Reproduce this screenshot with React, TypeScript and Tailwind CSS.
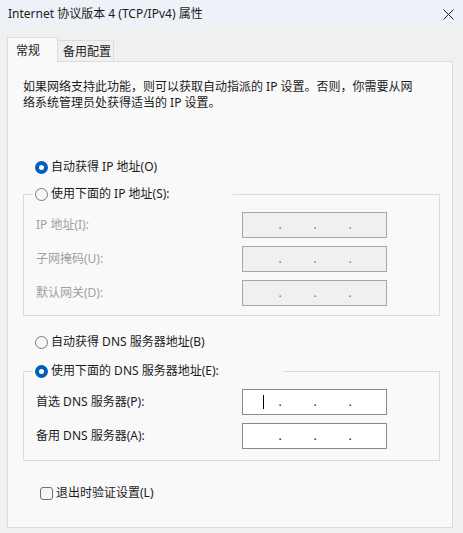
import React from 'react';

const font = { fontFamily: '"Noto Sans", "Noto Sans CJK SC", sans-serif' };

const Radio: React.FC<{ checked?: boolean }> = ({ checked }) =>
  checked ? (
    <span className="inline-block w-[13px] h-[13px] rounded-full border-[4px] border-[#005fb8] bg-white shrink-0" />
  ) : (
    <span className="inline-block w-[13px] h-[13px] rounded-full border border-[#7a7a7a] bg-[#f6f6f6] shrink-0" />
  );

const IpBox: React.FC<{ disabled?: boolean; caret?: boolean }> = ({ disabled, caret }) => (
  <div
    className={`relative w-[145px] h-[26px] border flex items-center pl-[35px] gap-[31px] ${
      disabled ? 'bg-[#f0f0f0] border-[#a6a6a6] text-[#777]' : 'bg-white border-[#8a8a8a] text-[#1b1b1b]'
    }`}
  >
    {caret && <span className="absolute left-[20px] top-[5px] w-px h-[14px] bg-black" />}
    <span className="w-[4px] text-center leading-none">.</span>
    <span className="w-[4px] text-center leading-none">.</span>
    <span className="w-[4px] text-center leading-none">.</span>
  </div>
);

const Row: React.FC<{ label: string; disabled?: boolean; caret?: boolean }> = ({ label, disabled, caret }) => (
  <div className="flex items-center h-[26px]">
    <span className={`w-[206px] ${disabled ? 'text-[#a0a0a0]' : 'text-[#1b1b1b]'}`}>{label}</span>
    <IpBox disabled={disabled} caret={caret} />
  </div>
);

export default function App() {
  return (
    <div className="w-[463px] h-[533px] bg-[#f0f0f0] text-[12px] text-[#1b1b1b] flex flex-col" style={font}>
      {/* title bar */}
      <div className="h-[28px] bg-[#eef2f8] flex items-center justify-between pl-[8px] pr-[9px]">
        <span>Internet 协议版本 4 (TCP/IPv4) 属性</span>
        <svg width="11" height="11" viewBox="0 0 11 11" className="text-[#222]">
          <path d="M0.5 0.5 L10.5 10.5 M10.5 0.5 L0.5 10.5" stroke="currentColor" strokeWidth="1" />
        </svg>
      </div>

      {/* tabs */}
      <div className="flex items-end pl-[7px] mt-[9px]">
        <div className="relative z-10 -mb-px h-[25px] w-[51px] bg-[#f9f9f9] border border-b-0 border-[#dcdcdc] pl-[8px] pt-[4px]">
          常规
        </div>
        <div className="h-[21px] w-[56px] border-t border-r border-[#dcdcdc] pl-[5px] pt-[2px]">备用配置</div>
      </div>

      {/* panel */}
      <div className="ml-[7px] w-[446px] h-[467px] bg-[#f9f9f9] border border-[#dcdcdc] flex flex-col pl-[15px] pr-[13px]">
        <p className="mt-[17px] leading-[16px]">
          如果网络支持此功能，则可以获取自动指派的 IP 设置。否则，你需要从网
          <br />
          络系统管理员处获得适当的 IP 设置。
        </p>

        <label className="mt-[48px] ml-[12px] h-[16px] flex items-center gap-[3px]">
          <Radio checked />
          <span>自动获得 IP 地址(O)</span>
        </label>

        <fieldset className="mt-[11px] w-[417px] border border-[#dcdcdc] pl-[12px] pb-[9px]">
          <legend className="ml-[-3px] w-[200px] h-[16px] pl-[2px] flex items-center gap-[3px] bg-[#f9f9f9]">
            <Radio />
            <span>使用下面的 IP 地址(S):</span>
          </legend>
          <div className="mt-[10px] flex flex-col gap-[8px]">
            <Row label="IP 地址(I):" disabled />
            <Row label="子网掩码(U):" disabled />
            <Row label="默认网关(D):" disabled />
          </div>
        </fieldset>

        <label className="mt-[18px] ml-[12px] h-[16px] flex items-center gap-[3px]">
          <Radio />
          <span>自动获得 DNS 服务器地址(B)</span>
        </label>

        <fieldset className="mt-[13px] w-[417px] border border-[#dcdcdc] pl-[12px] pb-[11px]">
          <legend className="ml-[-3px] w-[250px] h-[16px] pl-[2px] flex items-center gap-[3px] bg-[#f9f9f9]">
            <Radio checked />
            <span>使用下面的 DNS 服务器地址(E):</span>
          </legend>
          <div className="mt-[10px] flex flex-col gap-[8px]">
            <Row label="首选 DNS 服务器(P):" caret />
            <Row label="备用 DNS 服务器(A):" />
          </div>
        </fieldset>

        <label className="mt-[24px] ml-[17px] h-[16px] flex items-center gap-[3px]">
          <span className="inline-block w-[13px] h-[13px] rounded-[3px] border border-[#6f6f6f] bg-[#f6f6f6]" />
          <span>退出时验证设置(L)</span>
        </label>
      </div>
    </div>
  );
}
